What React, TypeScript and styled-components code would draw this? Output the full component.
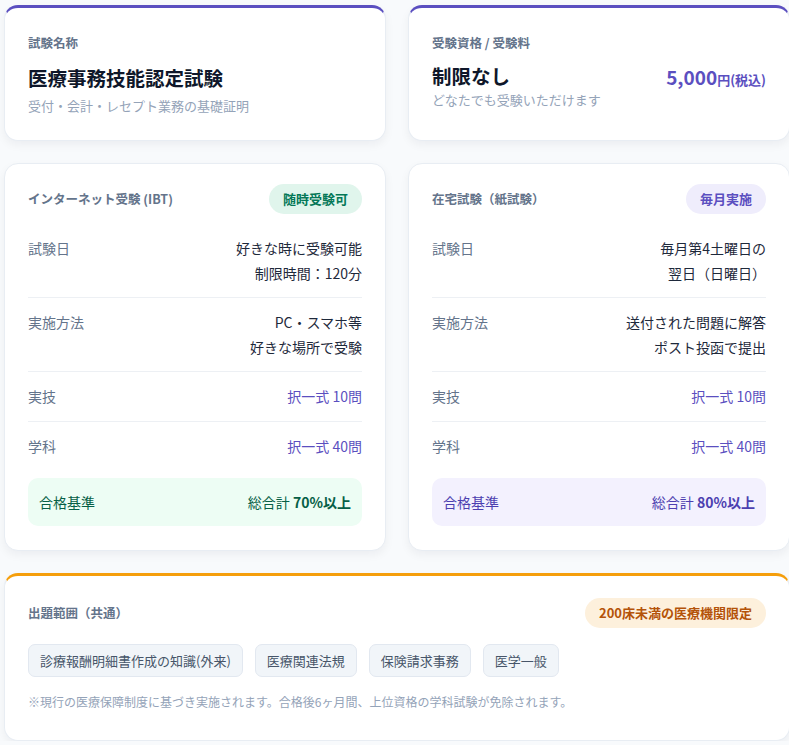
import React from "react";
import styled, { createGlobalStyle } from "styled-components";

const Global = createGlobalStyle`
  html, body { margin: 0; background: #f8fafc; overflow: hidden; }
  body { font-family: "Noto Sans CJK JP", "Noto Sans", sans-serif; color: #1e293b; }
`;

const Page = styled.div`
  width: 790px;
  padding: 5px 0 0 4px;
  display: grid;
  grid-template-columns: 382px 382px;
  column-gap: 22px;
  row-gap: 22px;
`;

const Card = styled.div<{ $accent?: string; $span?: boolean }>`
  background: #fff;
  border-radius: 14px;
  border: 1px solid #e8edf3;
  ${(p) => (p.$accent ? `border-top: 3px solid ${p.$accent};` : "")}
  box-shadow: 0 4px 10px rgba(15, 23, 42, 0.05);
  padding: ${(p) => (p.$accent ? "22px" : "20px")} 23px 24px;
  ${(p) => (p.$span ? "grid-column: 1 / span 2;" : "")}
`;

const Label = styled.div`
  font-size: 12.5px;
  font-weight: 700;
  color: #64748b;
  line-height: 26px;
`;

const Title = styled.div`
  font-size: 19.5px;
  font-weight: 700;
  color: #0f172a;
  margin-top: 8px;
  line-height: 28px;
`;

const Sub = styled.div`
  font-size: 13px;
  color: #94a3b8;
  margin-top: 4px;
  line-height: 20px;
`;

const Between = styled.div`
  display: flex;
  justify-content: space-between;
  align-items: center;
`;

const Price = styled.div`
  font-size: 19px;
  font-weight: 700;
  color: #5b4fc0;
  span { font-size: 13px; }
`;

const Header = styled(Between)`
  margin-bottom: 10px;
`;

const Badge = styled.div<{ $bg: string; $fg: string }>`
  background: ${(p) => p.$bg};
  color: ${(p) => p.$fg};
  font-size: 13px;
  font-weight: 700;
  padding: 0 14px;
  height: 30px;
  line-height: 30px;
  border-radius: 15px;
`;

const Row = styled.div<{ $last?: boolean }>`
  display: flex;
  justify-content: space-between;
  font-size: 14px;
  line-height: 24.5px;
  padding: 12px 0;
  border-bottom: ${(p) => (p.$last ? "none" : "1px solid #edf0f4")};
`;

const Key = styled.div`
  color: #64748b;
`;

const Val = styled.div<{ $accent?: boolean }>`
  text-align: right;
  color: ${(p) => (p.$accent ? "#5b4fc0" : "#1e293b")};
`;

const Pass = styled.div<{ $bg: string; $fg: string }>`
  margin-top: 8px;
  background: ${(p) => p.$bg};
  color: ${(p) => p.$fg};
  border-radius: 10px;
  height: 48px;
  padding: 0 11px;
  display: flex;
  justify-content: space-between;
  align-items: center;
  font-size: 14px;
  b { font-weight: 700; }
`;

const Tags = styled.div`
  display: flex;
  gap: 12px;
  margin-top: 16px;
`;

const Tag = styled.div`
  background: #f1f5f9;
  border: 1px solid #e2e8f0;
  border-radius: 7px;
  font-size: 13px;
  color: #475569;
  padding: 0 11px;
  height: 31px;
  line-height: 31px;
`;

const Note = styled.div`
  font-size: 12px;
  color: #94a3b8;
  margin-top: 16px;
  padding-bottom: 6px;
`;

type R = { k: string; v: React.ReactNode; accent?: boolean };

const Method = (p: {
  title: string;
  badge: string;
  bbg: string;
  bfg: string;
  rows: R[];
  pbg: string;
  pfg: string;
  pct: string;
}) => (
  <Card>
    <Header>
      <Label>{p.title}</Label>
      <Badge $bg={p.bbg} $fg={p.bfg}>{p.badge}</Badge>
    </Header>
    {p.rows.map((r, i) => (
      <Row key={r.k} $last={i === p.rows.length - 1}>
        <Key>{r.k}</Key>
        <Val $accent={r.accent}>{r.v}</Val>
      </Row>
    ))}
    <Pass $bg={p.pbg} $fg={p.pfg}>
      <span>合格基準</span>
      <span>総合計 <b>{p.pct}</b></span>
    </Pass>
  </Card>
);

export default function App() {
  return (
    <>
      <Global />
      <Page>
        <Card $accent="#5b4fc0">
          <Label>試験名称</Label>
          <Title>医療事務技能認定試験</Title>
          <Sub>受付・会計・レセプト業務の基礎証明</Sub>
        </Card>
        <Card $accent="#5b4fc0">
          <Label>受験資格 / 受験料</Label>
          <Between style={{ marginTop: 6 }}>
            <Title style={{ marginTop: 0 }}>制限なし</Title>
            <Price>5,000<span>円(税込)</span></Price>
          </Between>
          <Sub style={{ marginTop: 0 }}>どなたでも受験いただけます</Sub>
        </Card>
        <Method
          title="インターネット受験 (IBT)"
          badge="随時受験可"
          bbg="#e0f5ec"
          bfg="#047857"
          rows={[
            { k: "試験日", v: <>好きな時に受験可能<br />制限時間：120分</> },
            { k: "実施方法", v: <>PC・スマホ等<br />好きな場所で受験</> },
            { k: "実技", v: "択一式 10問", accent: true },
            { k: "学科", v: "択一式 40問", accent: true },
          ]}
          pbg="#edfdf4"
          pfg="#065f46"
          pct="70%以上"
        />
        <Method
          title="在宅試験（紙試験）"
          badge="毎月実施"
          bbg="#efedfc"
          bfg="#5b4fc0"
          rows={[
            { k: "試験日", v: <>毎月第4土曜日の<br />翌日（日曜日）</> },
            { k: "実施方法", v: <>送付された問題に解答<br />ポスト投函で提出</> },
            { k: "実技", v: "択一式 10問", accent: true },
            { k: "学科", v: "択一式 40問", accent: true },
          ]}
          pbg="#f3f1fe"
          pfg="#4c3fb0"
          pct="80%以上"
        />
        <Card $accent="#f59e0b" $span>
          <Header>
            <Label>出題範囲（共通）</Label>
            <Badge $bg="#fdf0dc" $fg="#b45309">200床未満の医療機関限定</Badge>
          </Header>
          <Tags>
            <Tag>診療報酬明細書作成の知識(外来)</Tag>
            <Tag>医療関連法規</Tag>
            <Tag>保険請求事務</Tag>
            <Tag>医学一般</Tag>
          </Tags>
          <Note>※現行の医療保障制度に基づき実施されます。合格後6ヶ月間、上位資格の学科試験が免除されます。</Note>
        </Card>
      </Page>
    </>
  );
}
